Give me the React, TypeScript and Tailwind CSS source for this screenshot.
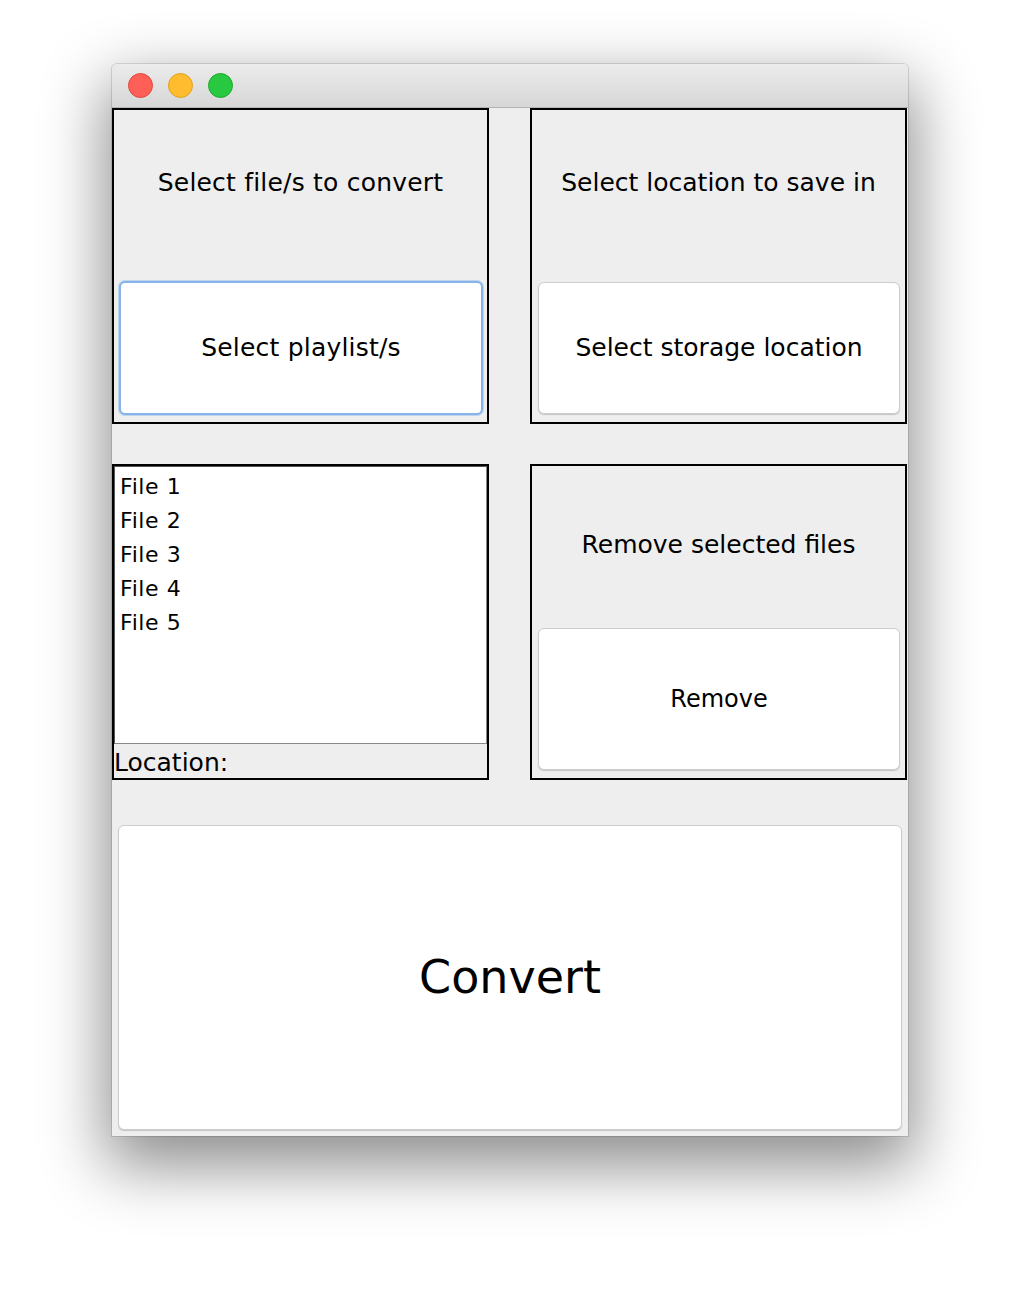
import React from "react";

const font = { fontFamily: '"DejaVu Sans", "Liberation Sans", sans-serif' };

function Btn({ children, focused, className }: { children: React.ReactNode; focused?: boolean; className?: string }) {
  return (
    <div
      className={
        "flex items-center justify-center bg-white text-black rounded-[6px] " +
        (focused
          ? "border-2 border-[#86b3e8] shadow-[0_0_0_1px_rgba(160,196,240,0.6)] "
          : "border border-[#cdcdcd] shadow-[0_1px_1px_rgba(0,0,0,0.18)] ") +
        (className ?? "")
      }
    >
      {children}
    </div>
  );
}

export default function App() {
  return (
    <div className="min-h-[1296px] bg-white pt-[64px] pl-[112px]" style={font}>
      <div className="w-[796px] h-[1072px] rounded-t-[5px] overflow-hidden bg-[#eeeeee] shadow-[0_24px_64px_6px_rgba(0,0,0,0.45),0_0_0_1px_rgba(0,0,0,0.12)] flex flex-col">
        {/* title bar */}
        <div className="h-[44px] shrink-0 bg-gradient-to-b from-[#ececec] to-[#d6d6d6] border-b border-[#b4b4b4] flex items-center gap-[15px] pl-[16px] pb-[1px]">
          <div className="w-[25px] h-[25px] rounded-full bg-[#fe5f57] border border-[#e2463f]" />
          <div className="w-[25px] h-[25px] rounded-full bg-[#febc2e] border border-[#e1a116]" />
          <div className="w-[25px] h-[25px] rounded-full bg-[#28c840] border border-[#1aab29]" />
        </div>

        {/* content grid */}
        <div className="grid grid-cols-[377px_377px] grid-rows-[316px_316px_316px] gap-x-[41px] gap-y-[40px]">
          {/* top-left */}
          <div className="border-2 border-black flex flex-col">
            <div className="h-[146px] flex items-center justify-center text-[25px] tracking-[0.2px] text-black">Select file/s to convert</div>
            <div className="pt-[25px] pl-[5px] pr-[4px]">
              <Btn focused className="h-[134px] text-[25px] tracking-[0.2px]">Select playlist/s</Btn>
            </div>
          </div>

          {/* top-right */}
          <div className="border-2 border-black flex flex-col">
            <div className="h-[146px] flex items-center justify-center text-[25px] text-black">Select location to save in</div>
            <div className="pt-[26px] pl-[6px] pr-[5px]">
              <Btn className="h-[132px] text-[25px]">Select storage location</Btn>
            </div>
          </div>

          {/* middle-left */}
          <div className="border-2 border-black flex flex-col">
            <div className="h-[278px] bg-white border border-[#8a8a8a] border-t-[#555] border-l-[#555] pt-[3px] pl-[5px] text-[22px] leading-[34px] tracking-[0.6px] text-black">
              <div>File 1</div>
              <div>File 2</div>
              <div>File 3</div>
              <div>File 4</div>
              <div>File 5</div>
            </div>
            <div className="flex-1 flex items-center text-[25px] text-black leading-none pt-[3px]">Location:</div>
          </div>

          {/* middle-right */}
          <div className="border-2 border-black flex flex-col">
            <div className="h-[158px] flex items-center justify-center text-[25px] text-black">Remove selected files</div>
            <div className="pt-[4px] pl-[6px] pr-[5px]">
              <Btn className="h-[142px] text-[24px]">Remove</Btn>
            </div>
          </div>

          {/* convert */}
          <div className="col-span-2 pt-[5px] pb-[6px] pl-[6px] pr-[5px]">
            <Btn className="h-full text-[46px]">Convert</Btn>
          </div>
        </div>
      </div>
    </div>
  );
}
